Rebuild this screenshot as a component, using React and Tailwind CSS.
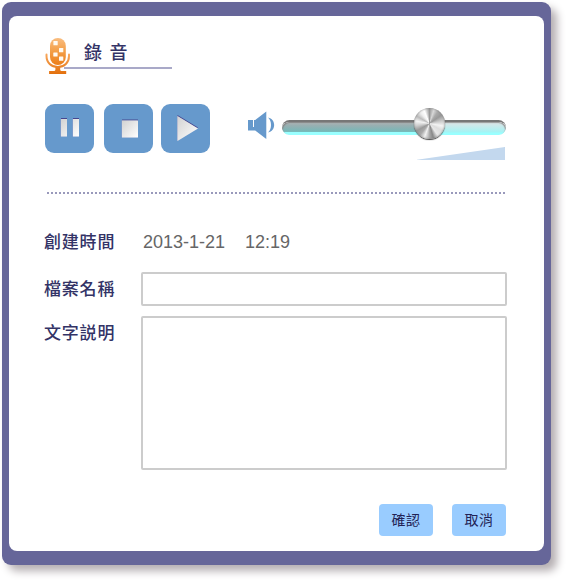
import React from "react";

const cjk = "font-['Liberation_Sans','Noto_Sans_CJK_TC',sans-serif]";

function MicIcon() {
  return (
    <svg width="26" height="38" viewBox="0 0 26 38" className="block shrink-0">
      <defs>
        <linearGradient id="mic" x1="0" y1="0" x2="0" y2="1">
          <stop offset="0" stopColor="#f9bd80" />
          <stop offset="0.45" stopColor="#f4a14c" />
          <stop offset="1" stopColor="#ec7e18" />
        </linearGradient>
        <linearGradient id="stand" gradientUnits="userSpaceOnUse" x1="0" y1="16" x2="0" y2="37">
          <stop offset="0" stopColor="#f9ab62" />
          <stop offset="1" stopColor="#e3700c" />
        </linearGradient>
      </defs>
      <rect x="5" y="1" width="15.8" height="27" rx="7.9" fill="url(#mic)" />
      <g fill="#fffaf2">
        <rect x="8.4" y="4" width="4.3" height="4.2" rx=".5" />
        <rect x="14" y="11" width="4.3" height="4.2" rx=".5" />
        <rect x="8.3" y="15.5" width="4.3" height="4" rx=".5" />
        <rect x="14" y="19.6" width="4.3" height="4.2" rx=".5" />
      </g>
      <path d="M1.5 17.5V19C1.5 25.6 6.3 30 12.8 30S24 25.6 24 19V17.5" fill="none" stroke="url(#stand)" strokeWidth="2" strokeLinecap="round" />
      <path d="M10.4 30h4.8v2.4c0 1.2.8 1.7 2 1.7h4V37H4.1v-2.9h4.3c1.2 0 2-.5 2-1.7z" fill="url(#stand)" />
    </svg>
  );
}

function PlayerButton({ label, shape, className = "" }) {
  return (
    <button aria-label={label} className={`h-[49px] w-[49px] rounded-[9px] bg-[#6699cc] ${className}`}>
      <svg width="49" height="49" viewBox="0 0 49 49" className="block">
        <defs>
          <linearGradient id={`g-${label}`} x1="0" y1="0" x2="1" y2="1">
            <stop offset="0" stopColor="#d2d2d2" />
            <stop offset="1" stopColor="#ffffff" />
          </linearGradient>
        </defs>
        <path d={shape} fill="#46468f" transform="translate(0 -1)" />
        <path d={shape} fill="#8f9dcb" transform="translate(-.5 0)" />
        <path d={shape} fill={`url(#g-${label})`} />
      </svg>
    </button>
  );
}

function SpeakerIcon() {
  return (
    <svg width="27" height="28" viewBox="0 0 27 28" className="block shrink-0">
      <path d="M0 9h5v7H6V9h1.2L18.3 0.5V28L7.2 19.5H0z" fill="#6699cc" />
      <path d="M20 6.5C28.2 8 28.2 20 20 21.5C24 18.5 24 9.5 20 6.5z" fill="#6699cc" />
    </svg>
  );
}

function Volume() {
  return (
    <div className="relative mt-[16px] ml-[7px] h-[40px] w-[224px]">
      <div className="flex h-[15px] overflow-hidden rounded-full border-t-2 border-[#777777]">
        <div className="w-[147px] rounded-l-full bg-[linear-gradient(#b4b8b9_0px,#9bafb1_3px,#78b7b7_9px,#7bbdbd_10px,#99ffff_10.5px)] shadow-[inset_1px_1px_1px_#888]" />
        <div className="flex-1 rounded-r-full bg-[linear-gradient(#dce2e4_0px,#d0e8ea_3px,#a5f3f4_10px,#99ffff_11px)] shadow-[inset_-1px_1px_1px_#999]" />
      </div>
      <div className="absolute top-[-12px] left-[132px] h-[31px] w-[31px] rounded-full bg-[conic-gradient(#999_0deg,#d8d8d8_18deg,#aaa_35deg,#999_55deg,#c4c4c4_75deg,#f4f4f4_100deg,#ddd_120deg,#e8e8e8_145deg,#888_165deg,#aaa_180deg,#f2f2f2_200deg,#aaa_220deg,#999_240deg,#ccc_260deg,#f4f4f4_280deg,#bbb_300deg,#eee_320deg,#fff_338deg,#999_360deg)] shadow-[inset_0_0_2px_#777,0_1px_1px_#444]" />
      <svg width="89" height="14" viewBox="0 0 89 14" className="mt-[11px] ml-auto block">
        <path d="M-1 14L88 1V14z M87 1H87.6V14H87z" fill="#c3d8ee" />
      </svg>
    </div>
  );
}

function Label({ children }) {
  return <span className="w-[97px] shrink-0 text-[17px] leading-[24px] font-medium tracking-[0.8px] text-[#333366]">{children}</span>;
}

export default function App() {
  return (
    <div className="h-[581px] w-[567px] overflow-hidden bg-white pt-[2px] pl-[2px]">
      <div className="h-[563px] w-[549px] rounded-[9px] bg-[#666699] px-[7px] py-[14px] shadow-[6px_6px_9px_#b5afb2]">
        <main className={`h-[535px] w-[535px] rounded-[8px] bg-white pt-[21px] pr-[37px] pl-[35px] ${cjk}`}>
          <header className="flex h-[38px]">
            <div className="z-10 ml-[1px] w-[26px]"><MicIcon /></div>
            <h1 className="-ml-[7px] h-[32px] w-[108px] border-b-2 border-[#a9a9c8] pl-[20px] text-[18px] leading-[32px] font-medium tracking-[1.3px] text-[#333366]">錄 音</h1>
          </header>

          <div className="mt-[29px] ml-[1px] flex h-[49px]">
            <PlayerButton label="Pause" shape="M16 15h6v17.5h-6z M28 15h6v17.5h-6z" />
            <PlayerButton label="Stop" shape="M18 16.5h16v17H18z" className="ml-[10px]" />
            <PlayerButton label="Play" shape="M16.5 12L37 24.5L16.5 37z" className="ml-[8px]" />
            <div className="mt-[7px] ml-[38px]"><SpeakerIcon /></div>
            <Volume />
          </div>

          <div className="mt-[39px] ml-[3px] h-[2px] w-[458px] bg-[repeating-linear-gradient(90deg,#9999bb_0px,#9999bb_2px,transparent_2px,transparent_4px)]" />

          <section className="mt-[37px] flex h-[24px]">
            <Label>創建時間</Label>
            <span className="ml-[2px] text-[18px] leading-[22px] text-[#666666]">2013-1-21</span>
            <span className="ml-[20px] text-[18px] leading-[22px] text-[#666666]">12:19</span>
          </section>
          <div className="mt-[17px] flex items-start">
            <div className="mt-[6px] flex"><Label>檔案名稱</Label></div>
            <input className="h-[34px] w-[366px] rounded-[2px] border-2 border-[#cccccc] outline-none" />
          </div>
          <div className="mt-[10px] flex items-start">
            <div className="mt-[6px] flex"><Label>文字説明</Label></div>
            <textarea className="block h-[154px] w-[366px] resize-none rounded-[2px] border-2 border-[#cccccc] outline-none" />
          </div>

          <footer className="mt-[34px] mr-[1px] flex justify-end gap-[19px]">
            <button className="h-[32px] w-[54px] rounded-[4px] bg-[#99ccff] text-[14px] leading-[32px] tracking-[0.5px] text-[#222255]">確認</button>
            <button className="h-[32px] w-[54px] rounded-[4px] bg-[#99ccff] text-[14px] leading-[32px] tracking-[0.5px] text-[#222255]">取消</button>
          </footer>
        </main>
      </div>
    </div>
  );
}
